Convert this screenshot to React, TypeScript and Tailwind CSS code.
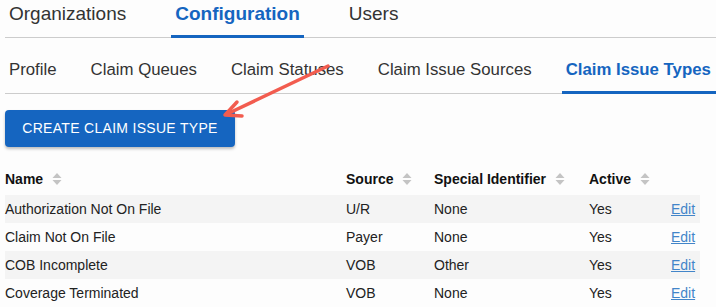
import React from 'react';

const MAIN_TABS = ['Organizations', 'Configuration', 'Users'];
const SUB_TABS = ['Profile', 'Claim Queues', 'Claim Statuses', 'Claim Issue Sources', 'Claim Issue Types'];

const ROWS = [
  { name: 'Authorization Not On File', source: 'U/R', special: 'None', active: 'Yes' },
  { name: 'Claim Not On File', source: 'Payer', special: 'None', active: 'Yes' },
  { name: 'COB Incomplete', source: 'VOB', special: 'Other', active: 'Yes' },
  { name: 'Coverage Terminated', source: 'VOB', special: 'None', active: 'Yes' },
];

const COLS = 'grid grid-cols-[341px_88px_155px_82px_29px]';

function SortIcon() {
  return (
    <svg width="10" height="14" viewBox="0 0 10 14" className="ml-[9px] shrink-0">
      <path d="M5 1 L9.5 6 L0.5 6 Z" fill="#c4c4c4" />
      <path d="M5 13 L9.5 8 L0.5 8 Z" fill="#c4c4c4" />
    </svg>
  );
}

function HeaderCell({ label }: { label: string }) {
  return (
    <div className="flex items-center font-bold text-[#111]">
      <span>{label}</span>
      <SortIcon />
    </div>
  );
}

export default function App() {
  return (
    <div
      className="relative w-[716px] h-[307px] overflow-hidden bg-[#fdfdfd] text-[#222]"
      style={{ fontFamily: '"Liberation Sans", Arial, sans-serif' }}
    >
      {/* top level tabs */}
      <div className="ml-[5px] flex gap-[41px] border-b border-[#cccccc]">
        {MAIN_TABS.map((tab) => {
          const active = tab === 'Configuration';
          return (
            <div
              key={tab}
              className={`relative px-[4px] pt-[3px] pb-[12px] text-[19px] leading-[22px] ${
                active ? 'font-bold text-[#1565c0]' : 'text-[#333]'
              }`}
            >
              {tab}
              {active && <div className="absolute left-0 right-0 -bottom-px h-[3px] bg-[#1565c0]" />}
            </div>
          );
        })}
      </div>

      {/* config sub tabs */}
      <div className="ml-[5px] flex gap-[26px] border-b border-[#cccccc] whitespace-nowrap">
        {SUB_TABS.map((tab) => {
          const active = tab === 'Claim Issue Types';
          return (
            <div
              key={tab}
              className={`relative shrink-0 px-[4px] pt-[22px] pb-[13px] text-[16.8px] leading-[20px] ${
                active ? 'font-bold text-[#1565c0]' : 'text-[#333]'
              }`}
            >
              {tab}
              {active && <div className="absolute left-0 right-[-20px] -bottom-px h-[3px] bg-[#1565c0]" />}
            </div>
          );
        })}
      </div>

      <div className="ml-[5px] mt-[16px]">
        <button className="h-[37px] w-[230px] rounded-[4px] bg-[#1565c0] text-[14px] uppercase tracking-[0.3px] text-white shadow-[0_2px_3px_rgba(0,0,0,0.25)]">
          Create Claim Issue Type
        </button>
      </div>

      <div className="ml-[5px] mt-[16px] w-[695px] text-[14px]">
        <div className={`${COLS} h-[32px] items-center`}>
          <HeaderCell label="Name" />
          <HeaderCell label="Source" />
          <HeaderCell label="Special Identifier" />
          <HeaderCell label="Active" />
          <div />
        </div>
        {ROWS.map((row, i) => (
          <div key={row.name} className={`${COLS} h-[28px] items-center ${i % 2 === 0 ? 'bg-[#f4f4f4]' : ''}`}>
            <div>{row.name}</div>
            <div>{row.source}</div>
            <div>{row.special}</div>
            <div>{row.active}</div>
            <div>
              <a href="#" className="text-[#4285c9] underline">
                Edit
              </a>
            </div>
          </div>
        ))}
      </div>

      {/* annotation arrow */}
      <svg className="absolute left-[200px] top-[55px]" width="140" height="75" viewBox="0 0 140 75">
        <g stroke="#f25c4f" strokeWidth="3.5" strokeLinecap="round" fill="none">
          <line x1="128" y1="11" x2="27" y2="59" />
          <polyline points="37,47 25,60 42,61" strokeLinejoin="round" />
        </g>
      </svg>
    </div>
  );
}
